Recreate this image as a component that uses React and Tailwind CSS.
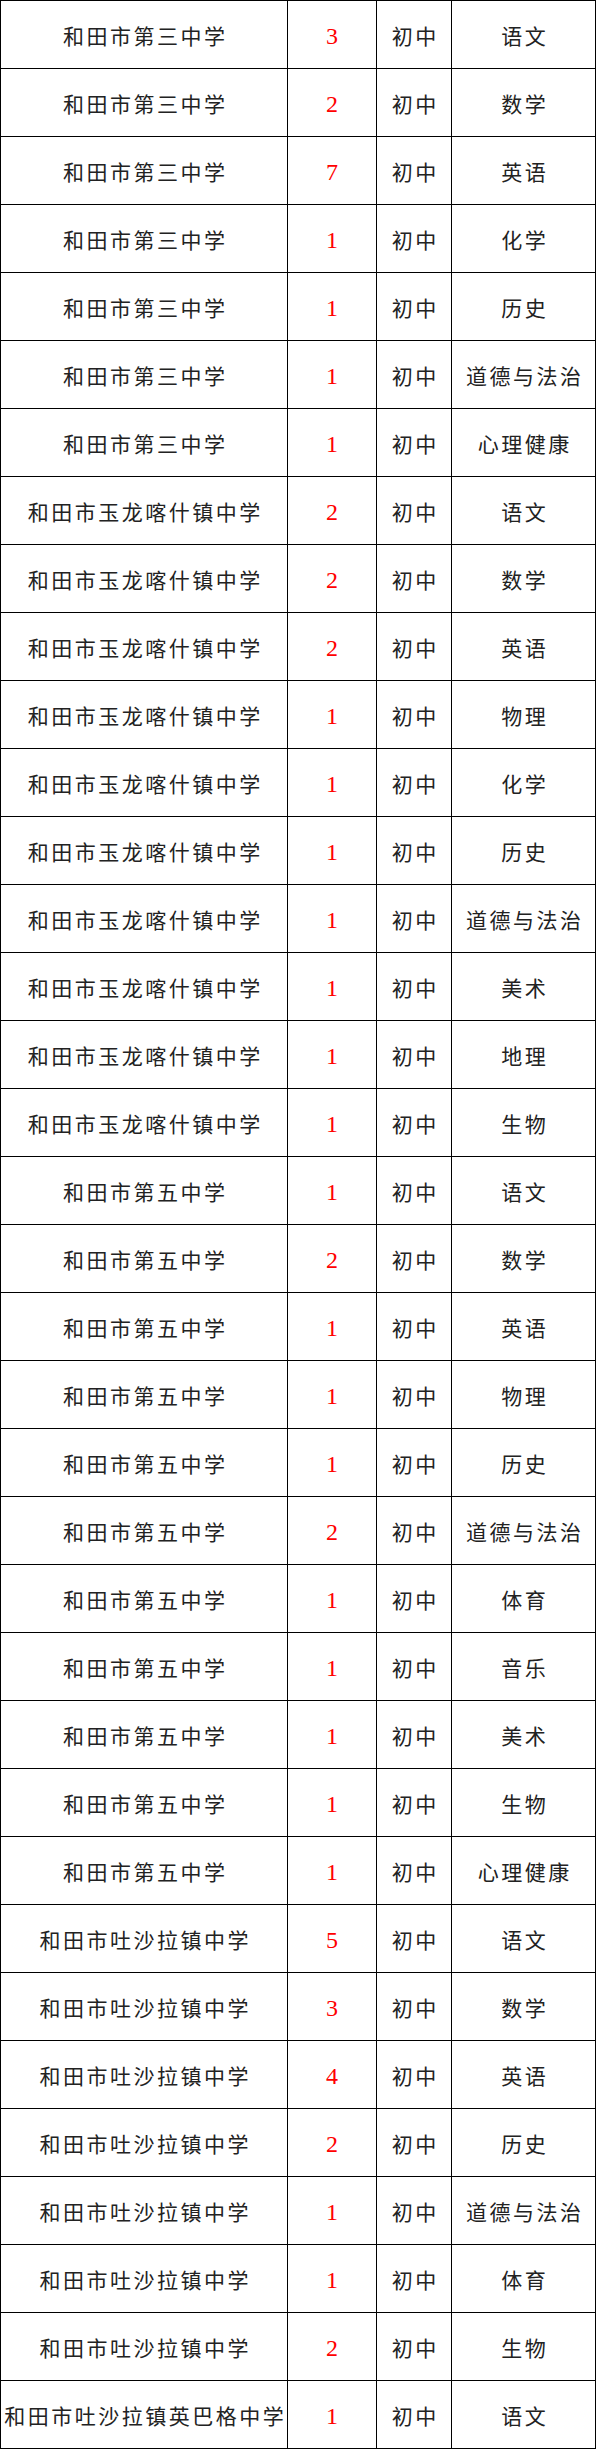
import React from 'react'

const S3 = '和田市第三中学'
const YL = '和田市玉龙喀什镇中学'
const S5 = '和田市第五中学'
const TS = '和田市吐沙拉镇中学'
const YB = '和田市吐沙拉镇英巴格中学'

const rows = [
  [S3, 3, '语文'],
  [S3, 2, '数学'],
  [S3, 7, '英语'],
  [S3, 1, '化学'],
  [S3, 1, '历史'],
  [S3, 1, '道德与法治'],
  [S3, 1, '心理健康'],
  [YL, 2, '语文'],
  [YL, 2, '数学'],
  [YL, 2, '英语'],
  [YL, 1, '物理'],
  [YL, 1, '化学'],
  [YL, 1, '历史'],
  [YL, 1, '道德与法治'],
  [YL, 1, '美术'],
  [YL, 1, '地理'],
  [YL, 1, '生物'],
  [S5, 1, '语文'],
  [S5, 2, '数学'],
  [S5, 1, '英语'],
  [S5, 1, '物理'],
  [S5, 1, '历史'],
  [S5, 2, '道德与法治'],
  [S5, 1, '体育'],
  [S5, 1, '音乐'],
  [S5, 1, '美术'],
  [S5, 1, '生物'],
  [S5, 1, '心理健康'],
  [TS, 5, '语文'],
  [TS, 3, '数学'],
  [TS, 4, '英语'],
  [TS, 2, '历史'],
  [TS, 1, '道德与法治'],
  [TS, 1, '体育'],
  [TS, 2, '生物'],
  [YB, 1, '语文'],
]

const cell = 'h-[68px] flex items-center justify-center border-r border-b border-black'
const cjk = "font-['Noto_Sans_CJK_SC',sans-serif] text-[21px] tracking-[2.5px] text-[#222] pt-[2px]"

export default function App() {
  return (
    <div className="w-[597px] bg-white">
      <div className="grid w-[596px] grid-cols-[287px_89px_75px_144px] border-l border-t border-black">
        {rows.map(([school, count, subject], i) => (
          <React.Fragment key={i}>
            <div className={`${cell} ${cjk} whitespace-nowrap`}>
              <span className="mr-[-2.5px]">{school}</span>
            </div>
            <div className={`${cell} font-['Liberation_Serif',serif] text-[24px] text-[#ff0000] pt-[2px]`}>
              {count}
            </div>
            <div className={`${cell} ${cjk}`}>
              <span className="mr-[-2.5px]">初中</span>
            </div>
            <div className={`${cell} ${cjk}`}>
              <span className="mr-[-2.5px]">{subject}</span>
            </div>
          </React.Fragment>
        ))}
      </div>
    </div>
  )
}
